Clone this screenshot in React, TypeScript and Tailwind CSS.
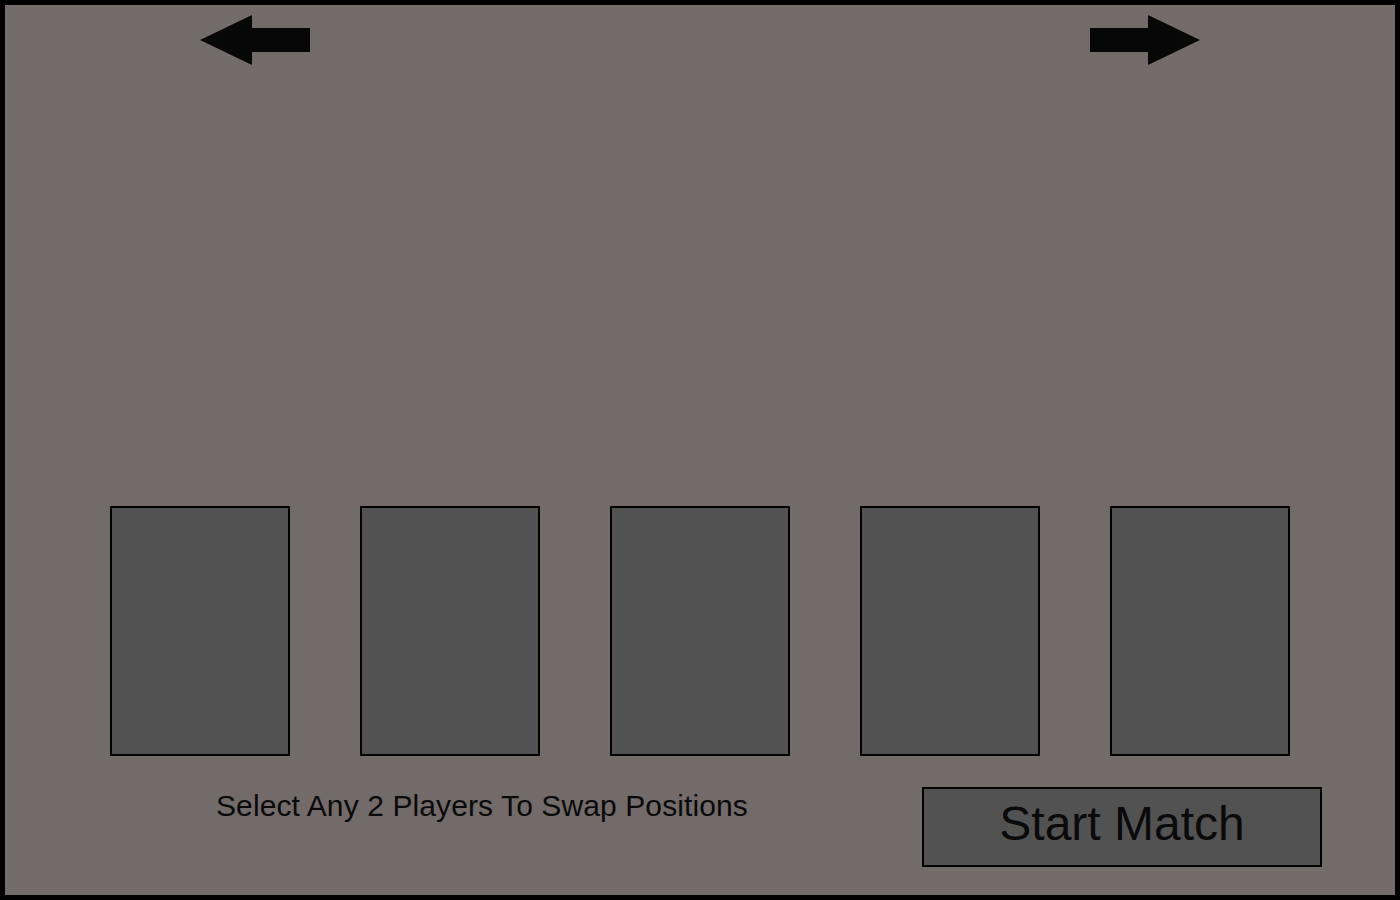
const cards = [1, 2, 3, 4, 5];

function Arrow({ dir }: { dir: "left" | "right" }) {
  return (
    <svg width="110" height="50" viewBox="0 0 110 50" className={dir === "right" ? "-scale-x-100" : ""}>
      <polygon points="0,25 52,0 52,13 110,13 110,37 52,37 52,50" fill="#070707" />
    </svg>
  );
}

export default function App() {
  return (
    <div
      className="w-[1400px] h-[900px] border-[5px] border-black bg-[#736a6a] flex flex-col text-[#0a0a0a]"
      style={{ fontFamily: '"Liberation Sans", Arial, sans-serif' }}
    >
      {/* Nav arrows */}
      <div className="flex justify-between px-[195px] pt-[10px]">
        <Arrow dir="left" />
        <Arrow dir="right" />
      </div>

      {/* Player slots */}
      <div className="flex justify-center gap-[70px] mt-[441px]">
        {cards.map((c) => (
          <div key={c} className="w-[180px] h-[250px] bg-[#525252] border-2 border-black" />
        ))}
      </div>

      {/* Footer */}
      <div className="flex items-start mt-[31px] pl-[211px] pr-[73px]">
        <p className="text-[30px] leading-[34px] mt-[2px] tracking-[0.1px]">Select Any 2 Players To Swap Positions</p>
        <button className="ml-auto w-[400px] h-[80px] bg-[#525252] border-2 border-black text-[48px] leading-none pb-[6px] flex items-center justify-center">
          Start Match
        </button>
      </div>
    </div>
  );
}
